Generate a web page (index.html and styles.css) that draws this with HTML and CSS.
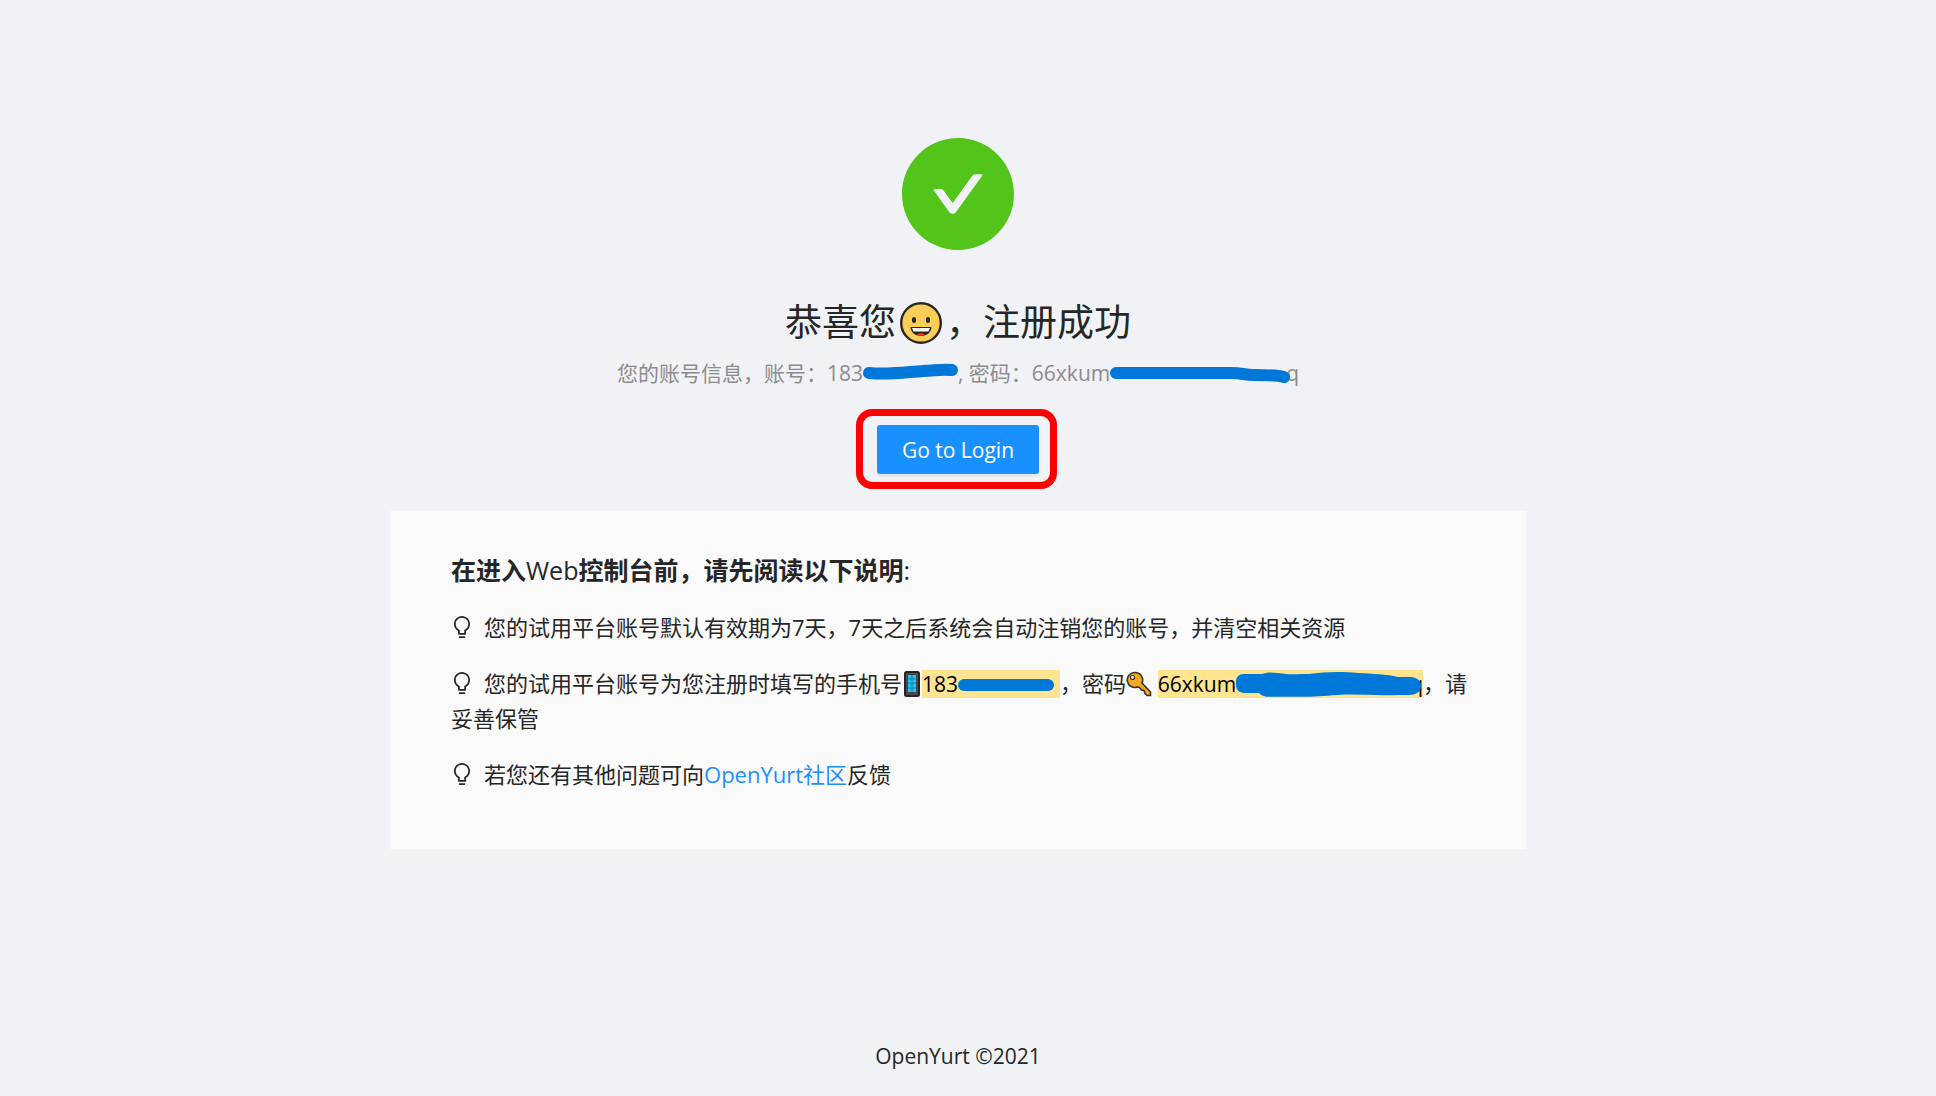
FILE: index.html
```html
<!DOCTYPE html>
<html lang="zh-CN">
<head>
  <meta charset="UTF-8">
  <title>OpenYurt</title>
  <link rel="stylesheet" href="styles.css">
</head>
<body>
  <svg class="defs" aria-hidden="true">
    <symbol id="bulb" viewBox="64 64 896 896">
      <path d="M632 888H392c-4.400 0-8 3.600-8 8v32c0 17.700 14.300 32 32 32h192c17.700 0 32-14.300 32-32v-32c0-4.400-3.600-8-8-8zM512 64c-181.100 0-328 146.900-328 328 0 121.400 66 227.400 164 284.100V792c0 17.700 14.300 32 32 32h264c17.700 0 32-14.300 32-32V676.100c98-56.700 164-162.700 164-284.100 0-181.100-146.900-328-328-328zm127.900 549.800L604 634.600V752H420V634.600l-35.900-20.800C305.400 568.300 256 484.500 256 392c0-141.400 114.600-256 256-256s256 114.600 256 256c0 92.500-49.400 176.300-128.100 221.800z"/>
    </symbol>
  </svg>
  <div class="page">
    <main class="result">
      <svg class="result-icon" viewBox="64 64 896 896" aria-hidden="true">
        <path d="M512 64C264.600 64 64 264.600 64 512s200.600 448 448 448 448-200.600 448-448S759.400 64 512 64zm193.500 301.700l-210.600 292a31.800 31.800 0 01-51.700 0L318.500 484.900c-3.800-5.300 0-12.700 6.500-12.700h46.900c10.200 0 19.900 4.900 25.900 13.300l71.200 98.800 157.200-218c6-8.300 15.600-13.300 25.900-13.300H699c6.500 0 10.300 7.400 6.500 12.700z"/>
      </svg>
      <h1 class="title">恭喜您<svg class="smile" viewBox="0 0 42 42" aria-hidden="true">
          <circle cx="21" cy="21" r="19.800" fill="#ffce56" stroke="#262626" stroke-width="2.400"/>
          <rect x="12" y="15" width="4" height="6" rx="2" fill="#262626"/>
          <rect x="26" y="15" width="4" height="6" rx="2" fill="#262626"/>
          <path d="M10.500 25h21c0 5-4.500 9-10.500 9s-10.500-4-10.500-9z" fill="#262626"/>
          <path d="M12 26h18l-1.500 3.500h-15z" fill="#fff"/>
          <path d="M17 33c1-2.500 7-2.500 8 0-2 1.200-6 1.200-8 0z" fill="#f03a17"/>
        </svg>，注册成功</h1>
      <p class="subtitle">您的账号信息，账号：183<svg class="stroke stroke-short" viewBox="0 0 95 18" aria-hidden="true">
          <path d="M6 10c20 2 38-1 54-2s20-2 29-1"/>
        </svg>, 密码：66xkum<svg class="stroke stroke-long" viewBox="0 0 181 18" aria-hidden="true">
          <path d="M6 8h116c10 0 12 2 22 2 14 0 22 0 30 2"/>
        </svg>q</p>
      <div class="action">
        <button class="login-button" type="button">Go to Login</button>
      </div>
      <section class="notice">
        <h2 class="notice-title">在进入<span class="latin">Web</span>控制台前，请先阅读以下说明<span class="latin">:</span></h2>
        <p><svg class="bulb" aria-hidden="true"><use href="#bulb"/></svg>您的试用平台账号默认有效期为7天，7天之后系统会自动注销您的账号，并清空相关资源</p>
        <p><svg class="bulb" aria-hidden="true"><use href="#bulb"/></svg>您的试用平台账号为您注册时填写的手机号<svg class="phone" viewBox="0 0 16 26" aria-hidden="true">
            <rect x="1" y="1" width="14" height="24" rx="1.500" fill="#4a4a4a" stroke="#262626" stroke-width="2"/>
            <path d="M4 4h8v17H4z" fill="#1fc3f3"/>
            <path d="M4 8h8M4 12h8M4 17h8M8 4v17" stroke="#0e7fa4" stroke-width="1"/>
          </svg><mark>183<svg class="stroke stroke-phone" viewBox="0 0 96 14" aria-hidden="true">
            <path d="M6 7h84"/>
          </svg></mark>，密码<svg class="key" viewBox="0 0 26 26" aria-hidden="true">
            <path d="M9 1.500a7.500 7.500 0 1 0 2.500 14.500l2 .5 2 2.500 2.500.5 1 3 2 2h3.500v-3.500l-8.500-9A7.500 7.500 0 0 0 9 1.500z" fill="#f2a91c" stroke="#363025" stroke-width="1.600"/>
            <circle cx="6.500" cy="6.500" r="2" fill="#fafafa" stroke="#363025" stroke-width="1.200"/>
          </svg> <mark>66xkum<svg class="stroke stroke-password" viewBox="0 0 188 26" aria-hidden="true">
            <path class="blob" d="M8 3h18c5-2 10-2 16-1 12 2 20 1 32 1 14-2 30-3 50-1 14 1 28 1 40 4h12c7 0 11 4 11 9s-4 9-12 9h-12c-20 1-40-1-60 0-16 1-22 2-40 2H38c-8 0-10 0-15-4H9c-6 0-9-3-9-9V11c0-5 3-8 8-8z"/>
          </svg>q</mark>，请妥善保管</p>
        <p><svg class="bulb" aria-hidden="true"><use href="#bulb"/></svg>若您还有其他问题可向<a href="#">OpenYurt社区</a>反馈</p>
      </section>
    </main>
    <footer class="footer">OpenYurt ©2021</footer>
  </div>
</body>
</html>
```

FILE: styles.css
```css
* {
  box-sizing: border-box;
}

body {
  margin: 0;
  background-color: #f0f2f5;
  color: #262626;
  font-family: "Open Sans", "Noto Sans CJK SC", sans-serif;
  font-size: 21px;
  line-height: 34px;
}

.defs {
  display: none;
}

.page {
  display: flex;
  flex-direction: column;
  min-height: 100vh;
  margin-right: 20px;
}

.result {
  display: flex;
  flex: 1;
  flex-direction: column;
  align-items: center;
  width: 100%;
  max-width: 1232px;
  margin: 0 auto;
  padding: 138px 48px 0;
}

.result-icon {
  width: 112px;
  height: 112px;
  fill: #52c41a;
}

.title {
  margin: 38px 0 0;
  font-size: 37px;
  font-weight: 400;
  line-height: 68px;
}

.smile {
  width: 42px;
  height: 42px;
  margin: 0 4px;
  vertical-align: -8px;
}

.subtitle {
  margin: 0;
  color: #8c8c8c;
}

/* marker strokes that hide the account and password */
.stroke {
  position: relative;
  overflow: visible;
  fill: none;
  stroke: #0078d9;
  stroke-width: 12px;
  stroke-linecap: round;
}

.stroke-short {
  width: 95px;
  height: 18px;
}

.stroke-long {
  width: 181px;
  height: 18px;
  margin-right: -5px;
  vertical-align: -2px;
}

.stroke-phone {
  width: 96px;
  height: 14px;
  margin-right: 6px;
}

.stroke-password {
  width: 186px;
  height: 26px;
  margin-right: -12px;
  vertical-align: -5px;
}

.blob {
  fill: #0078d9;
  stroke: none;
}

.action {
  position: relative;
  margin: 35px 0 37px;
}

/* red frame around the button */
.action::after {
  content: "";
  position: absolute;
  inset: -16px -18px -15px -21px;
  border: 7px solid #ff0000;
  border-radius: 16px;
  pointer-events: none;
}

.login-button {
  display: block;
  height: 49px;
  padding: 0 25px;
  border: none;
  border-radius: 3px;
  background-color: #1890ff;
  box-shadow: 0 3px 0 rgba(0, 0, 0, 0.04);
  color: #fff;
  font: inherit;
  cursor: pointer;
}

.notice {
  width: 100%;
  padding: 39px 48px 36px 61px;
  background-color: #fafafa;
  font-size: 22px;
}

.notice-title {
  margin: 0 0 20px;
  font-size: 25px;
  font-weight: 700;
  line-height: 40px;
}

.latin {
  font-weight: 400;
}

.notice p {
  margin: 0 0 22px;
}

.bulb {
  width: 22px;
  height: 22px;
  margin-right: 11px;
  vertical-align: -2px;
  fill: #262626;
}

.phone {
  width: 16px;
  height: 26px;
  margin: 0 2px;
  vertical-align: -5px;
}

.key {
  width: 26px;
  height: 26px;
  vertical-align: -5px;
}

mark {
  background-color: #ffe58f;
  color: #000;
  font-size: 21px;
}

a {
  color: #1890ff;
  text-decoration: none;
}

.footer {
  padding: 19px 0 23px;
  text-align: center;
}
```
